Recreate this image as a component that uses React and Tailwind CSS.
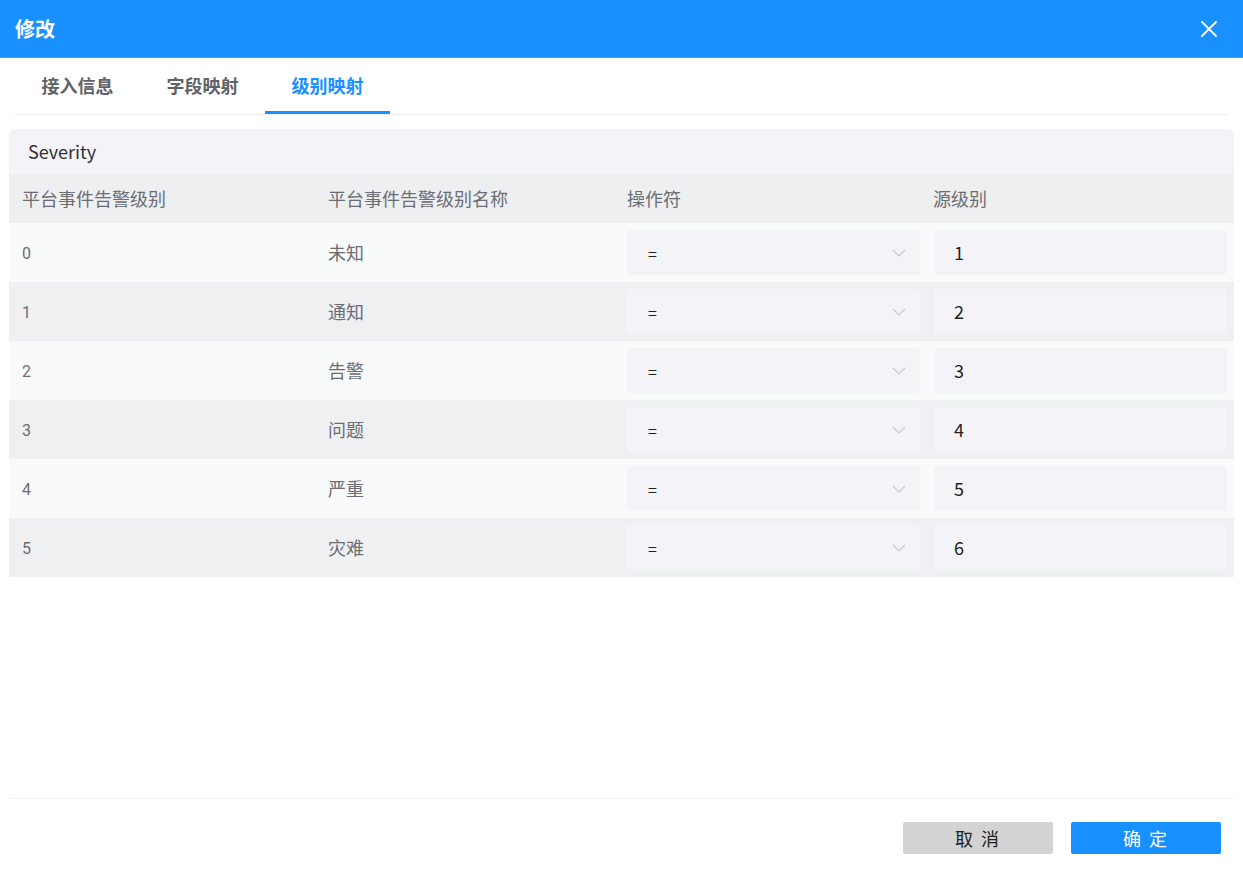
import React from "react";

const rows = [
  ["0", "未知", "1"],
  ["1", "通知", "2"],
  ["2", "告警", "3"],
  ["3", "问题", "4"],
  ["4", "严重", "5"],
  ["5", "灾难", "6"],
];

const font = { fontFamily: '"Noto Sans CJK SC", "Noto Sans", sans-serif' };

export default function App() {
  return (
    <div className="w-[1243px] h-[869px] bg-white flex flex-col overflow-hidden" style={font}>
      <div className="h-[58px] bg-[#1890ff] flex items-center justify-between pl-[15px] pr-[26px] border-b border-[#3da0ff]">
        <span className="text-white text-[20px] font-bold leading-none">修改</span>
        <svg width="16" height="16" viewBox="0 0 16 16" className="text-white">
          <path d="M1 1L15 15M15 1L1 15" stroke="currentColor" strokeWidth="1.8" strokeLinecap="round" />
        </svg>
      </div>

      <div className="mx-[15px] w-[1213px] flex border-b border-[#eeeeee] h-[57px]">
        {["接入信息", "字段映射", "级别映射"].map((t, i) => (
          <div
            key={t}
            className={
              "w-[125px] flex items-center justify-center text-[18px] font-bold pt-[1px] border-b-[3px] " +
              (i === 2 ? "text-[#1890ff] border-[#1890ff]" : "text-[#606266] border-transparent")
            }
          >
            {t}
          </div>
        ))}
      </div>

      <div className="mx-[9px] mt-[14px] w-[1225px]">
        <div className="h-[45px] bg-[#f4f4f8] rounded-t-[6px] flex items-center pl-[19px] text-[18px] text-[#303133]">
          Severity
        </div>
        <div className="grid grid-cols-[306px_299px_312px_1fr] h-[49px] bg-[#eeeff1] items-center text-[18px] text-[#6b6d73]">
          <div className="pl-[13px]">平台事件告警级别</div>
          <div className="pl-[13px]">平台事件告警级别名称</div>
          <div className="pl-[13px]">操作符</div>
          <div className="pl-[7px]">源级别</div>
        </div>
        {rows.map(([lvl, name, src], i) => (
          <div
            key={lvl}
            className={
              "grid grid-cols-[306px_299px_312px_1fr] h-[59px] items-center " +
              (i % 2 === 0 ? "bg-[#f9fafa]" : "bg-[#eff0f2]")
            }
          >
            <div className="pl-[13px] text-[16px] leading-none pt-[2px] text-[#6b6d73]" style={{ fontFamily: "Roboto, sans-serif" }}>{lvl}</div>
            <div className="pl-[13px] text-[18px] text-[#6b6d73]">{name}</div>
            <div className="pl-[13px] pr-[6px]">
              <div className="h-[45px] bg-[#f4f4f8] rounded-[4px] flex items-center justify-between pl-[21px] pr-[14px]">
                <span className="text-[16px] text-[#222]">=</span>
                <svg width="14" height="8" viewBox="0 0 14 8">
                  <path d="M1 1L7 7L13 1" fill="none" stroke="#c8c9cc" strokeWidth="1.2" />
                </svg>
              </div>
            </div>
            <div className="pl-[8px] pr-[7px]">
              <div className="h-[45px] bg-[#f4f4f8] rounded-[4px] flex items-center pl-[20px] text-[18px] text-[#222]">
                {src}
              </div>
            </div>
          </div>
        ))}
      </div>

      <div className="flex-1" />

      <div className="mx-[9px] w-[1225px] border-t border-[#eeeeee] h-[71px] flex items-start justify-end pt-[23px] pr-[13px] gap-[18px]">
        <button className="w-[150px] h-[32px] bg-[#d3d3d3] rounded-[2px] text-[18px] text-[#222] tracking-[2px] flex items-center justify-center">
          取 消
        </button>
        <button className="w-[150px] h-[32px] bg-[#1890ff] rounded-[2px] text-[18px] text-white tracking-[2px] flex items-center justify-center">
          确 定
        </button>
      </div>
    </div>
  );
}
